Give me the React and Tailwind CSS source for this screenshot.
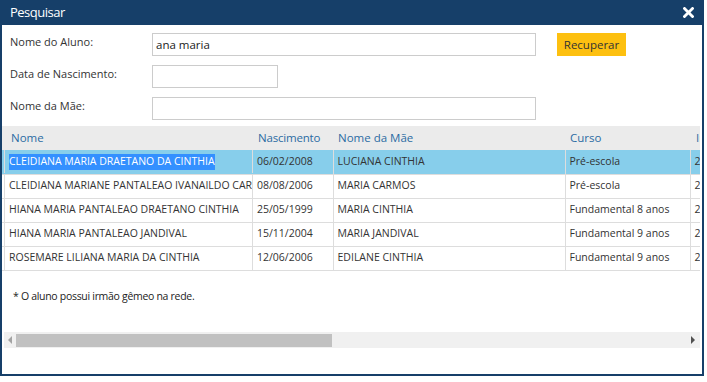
import React from "react";

const alunos = [
  {
    id: 1,
    nome: "CLEIDIANA MARIA DRAETANO DA CINTHIA",
    nascimento: "06/02/2008",
    mae: "LUCIANA CINTHIA",
    curso: "Pré-escola",
    ano: "2019",
  },
  {
    id: 2,
    nome: "CLEIDIANA MARIANE PANTALEAO IVANAILDO CARMO",
    nascimento: "08/08/2006",
    mae: "MARIA CARMOS",
    curso: "Pré-escola",
    ano: "2019",
  },
  {
    id: 3,
    nome: "HIANA MARIA PANTALEAO DRAETANO CINTHIA",
    nascimento: "25/05/1999",
    mae: "MARIA CINTHIA",
    curso: "Fundamental 8 anos",
    ano: "2019",
  },
  {
    id: 4,
    nome: "HIANA MARIA PANTALEAO JANDIVAL",
    nascimento: "15/11/2004",
    mae: "MARIA JANDIVAL",
    curso: "Fundamental 9 anos",
    ano: "2019",
  },
  {
    id: 5,
    nome: "ROSEMARE LILIANA MARIA DA CINTHIA",
    nascimento: "12/06/2006",
    mae: "EDILANE CINTHIA",
    curso: "Fundamental 9 anos",
    ano: "2019",
  },
];

function Campo({ label, largura, valor }) {
  return (
    <div className="flex items-start h-[23px]">
      <label className="w-[142px] pt-[1px] text-[11px] text-[#333]">{label}</label>
      <input
        type="text"
        defaultValue={valor}
        className={`${largura} h-[23px] border border-[#cccccc] bg-white px-[3px] text-[11.5px] text-[#222] outline-none`}
      />
    </div>
  );
}

export default function App() {
  return (
    <div
      className="w-[704px] h-[376px] border-2 border-t-0 border-[#163f69] bg-white flex flex-col"
      style={{ fontFamily: '"Open Sans", "Liberation Sans", sans-serif' }}
    >
      {/* barra de titulo */}
      <div className="h-[25px] -mx-[2px] bg-[#163f69] flex items-center justify-between pl-[10px] pr-[10px]">
        <span className="text-white text-[13px] tracking-[-0.5px]">Pesquisar</span>
        <svg width="11" height="11" viewBox="0 0 11 11">
          <path d="M1.5 1.5 L9.5 9.5 M9.5 1.5 L1.5 9.5" stroke="white" strokeWidth="2.8" strokeLinecap="square" />
        </svg>
      </div>

      {/* formulario */}
      <div className="pl-[8px] pt-[8px] flex flex-col gap-[9px]">
        <div className="flex items-center gap-[21px]">
          <Campo label="Nome do Aluno:" largura="w-[384px]" valor="ana maria" />
          <button
            type="button"
            className="h-[23px] w-[69px] bg-[#fdc010] text-[11.5px] text-[#333]"
          >
            Recuperar
          </button>
        </div>
        <Campo label="Data de Nascimento:" largura="w-[126px]" valor="" />
        <Campo label="Nome da Mãe:" largura="w-[384px]" valor="" />
      </div>

      {/* grade de resultados */}
      <div className="mt-[6px] mr-[2px] overflow-hidden">
        <table className="border-collapse text-left text-[10.5px] text-[#333] table-fixed w-[740px]">
          <colgroup>
            <col className="w-[251px]" />
            <col className="w-[80px]" />
            <col className="w-[232px]" />
            <col className="w-[125px]" />
            <col className="w-[52px]" />
          </colgroup>
          <thead className="bg-[#ebebeb] text-[#2c6ca3]">
            <tr className="h-[24px]">
              <th className="pl-[9px] font-normal text-[11.5px]">Nome</th>
              <th className="pl-[5px] font-normal text-[11.5px] tracking-[-0.2px]">Nascimento</th>
              <th className="pl-[5px] font-normal text-[11.5px]">Nome da Mãe</th>
              <th className="pl-[5px] font-normal text-[11.5px]">Curso</th>
              <th className="pl-[6px] font-normal text-[11.5px]">Inscrição</th>
            </tr>
          </thead>
          <tbody>
            {alunos.map((aluno, i) => {
              const sel = i === 0;
              return (
                <tr
                  key={aluno.id}
                  className={`h-[24px] border-b border-[#dddddd] ${sel ? "bg-[#87ceeb]" : "bg-white"}`}
                >
                  <td className="pl-[2px] p-0">
                    <div className="border-l border-r border-[#dddddd] h-[23px] flex items-center pl-[4px] overflow-hidden whitespace-nowrap">
                      {sel ? (
                        <span className="bg-[#3390ff] text-white">{aluno.nome}</span>
                      ) : (
                        aluno.nome
                      )}
                    </div>
                  </td>
                  <td className="pl-[4px] border-r border-[#dddddd] whitespace-nowrap overflow-hidden">
                    {aluno.nascimento}
                  </td>
                  <td className="pl-[4px] border-r border-[#dddddd] whitespace-nowrap overflow-hidden">
                    {aluno.mae}
                  </td>
                  <td className="pl-[4px] border-r border-[#dddddd] whitespace-nowrap overflow-hidden">
                    {aluno.curso}
                  </td>
                  <td className="pl-[4px] whitespace-nowrap overflow-hidden">{aluno.ano}</td>
                </tr>
              );
            })}
          </tbody>
        </table>
      </div>

      <p className="mt-[18px] pl-[11px] text-[10.5px] text-[#222] tracking-[-0.3px]">
        * O aluno possui irmão gêmeo na rede.
      </p>

      {/* barra de rolagem */}
      <div className="mt-[28px] ml-[2px] mr-[2px] h-[16px] bg-[#f0f0f0] flex items-center">
        <div className="w-[12px] flex justify-center">
          <div className="w-0 h-0 border-y-[4px] border-y-transparent border-r-[4px] border-r-[#a3a3a3]" />
        </div>
        <div className="w-[316px] h-[13px] bg-[#c1c1c1]" />
        <div className="flex-1" />
        <div className="w-[14px] flex justify-center">
          <div className="w-0 h-0 border-y-[4px] border-y-transparent border-l-[4px] border-l-[#505050]" />
        </div>
      </div>
    </div>
  );
}
